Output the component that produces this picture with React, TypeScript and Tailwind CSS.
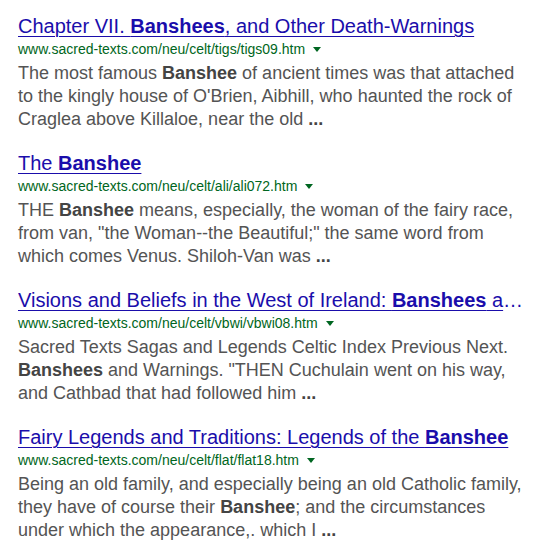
const results = [
  {
    title: (
      <>
        Chapter VII. <b>Banshees</b>, and Other Death-Warnings
      </>
    ),
    url: 'www.sacred-texts.com/neu/celt/tigs/tigs09.htm',
    snippet: (
      <>
        The most famous <b>Banshee</b> of ancient times was that attached to the kingly house of O'Brien, Aibhill, who
        haunted the rock of Craglea above Killaloe, near the old <b>...</b>
      </>
    ),
  },
  {
    title: (
      <>
        The <b>Banshee</b>
      </>
    ),
    url: 'www.sacred-texts.com/neu/celt/ali/ali072.htm',
    snippet: (
      <>
        THE <b>Banshee</b> means, especially, the woman of the fairy race, from van, "the Woman--the Beautiful;" the
        same word from which comes Venus. Shiloh-Van was <b>...</b>
      </>
    ),
  },
  {
    title: (
      <>
        Visions and Beliefs in the West of Ireland: <b>Banshees</b> and Warnings
      </>
    ),
    url: 'www.sacred-texts.com/neu/celt/vbwi/vbwi08.htm',
    snippet: (
      <>
        Sacred Texts Sagas and Legends Celtic Index Previous Next. <b>Banshees</b> and Warnings. "THEN Cuchulain went on
        his way, and Cathbad that had followed him <b>...</b>
      </>
    ),
  },
  {
    title: (
      <>
        Fairy Legends and Traditions: Legends of the <b>Banshee</b>
      </>
    ),
    url: 'www.sacred-texts.com/neu/celt/flat/flat18.htm',
    snippet: (
      <>
        Being an old family, and especially being an old Catholic family, they have of course their <b>Banshee</b>; and
        the circumstances under which the appearance,. which I <b>...</b>
      </>
    ),
  },
];

export default function App() {
  return (
    <div className="min-h-[551px] w-[560px] bg-white pl-[18px] pr-[36px] pt-[13px] font-['Liberation_Sans',Arial,sans-serif]">
      <div className="flex flex-col gap-[19px]">
        {results.map((r, i) => (
          <div key={i} className="flex flex-col">
            <a
              href="#"
              className="truncate text-[20px] leading-[26px] text-[#1a0dab] underline decoration-1 underline-offset-[3px] [&_b]:font-bold"
            >
              {r.title}
            </a>
            <div className="flex items-center text-[14px] leading-[20px] text-[#006621]">
              <span>{r.url}</span>
              <span className="ml-[8px] mt-[1px] h-0 w-0 border-x-[4px] border-t-[5px] border-x-transparent border-t-[#006621]" />
            </div>
            <p className="mt-[3px] text-[18px] leading-[23px] text-[#545454] [&_b]:text-[#444]">{r.snippet}</p>
          </div>
        ))}
      </div>
    </div>
  );
}
